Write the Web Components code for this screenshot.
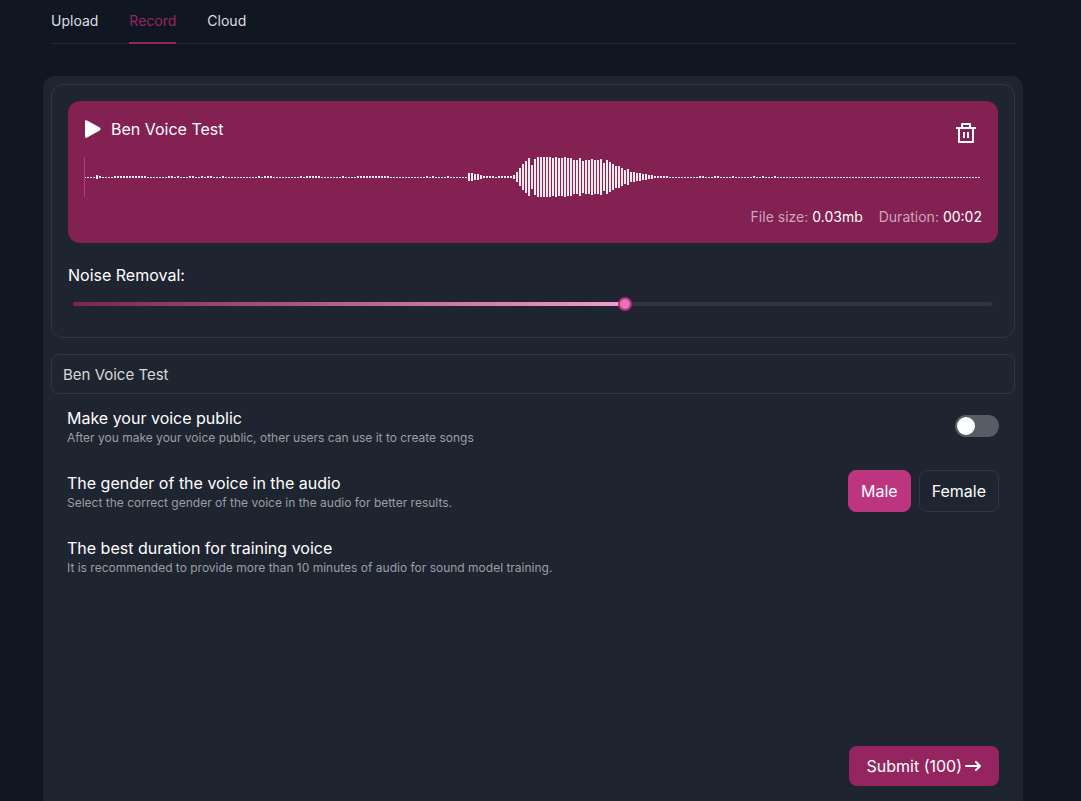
<!DOCTYPE html>
<html lang="en">
<head>
<meta charset="utf-8">
<title>Record voice</title>
<style>
  html { background: #111722; }
  body {
    margin: 0;
    min-height: 100vh;
    font: 16px/24px Inter, "Liberation Sans", sans-serif;
    color: #fff;
    --accent: #942560;
    --accent-deep: #822152;
    --accent-bright: #bd347f;
    --line: #2b3843;
    --panel: #1e2530;
    --muted: #9a9ea3;
  }
</style>
</head>
<body>
<voice-page></voice-page>

<script>
const define = (name, html, setup) => {
  const template = document.createElement('template');
  template.innerHTML = html;
  customElements.define(name, class extends HTMLElement {
    constructor() {
      super();
      this.attachShadow({ mode: 'open' }).append(template.content.cloneNode(true));
    }
    connectedCallback() {
      if (setup) setup(this, this.shadowRoot);
    }
  });
};

define('source-tabs', `
  <style>
    :host { display: block; padding: 0 8px; }
    nav { display: flex; gap: 31px; height: 43px; border-bottom: 1px solid #272b33; }
    a { box-sizing: border-box; height: 44px; padding-top: 11px; font-size: 14px; line-height: 20px; color: #dcdee0; text-decoration: none; }
    a[aria-current] { color: var(--accent); border-bottom: 2px solid var(--accent); }
  </style>
  <nav aria-label="Source">
    <a href="#upload">Upload</a>
    <a href="#record" aria-current="page">Record</a>
    <a href="#cloud">Cloud</a>
  </nav>`);

define('wave-form', `
  <style>
    :host { display: block; height: 40px; overflow: hidden; }
    svg { display: block; width: 100%; height: 40px; }
  </style>
  <svg shape-rendering="crispEdges" aria-hidden="true">
    <path class="bars" fill="#f0eaed"/>
    <rect width="1" height="40" fill="#bd347f"/>
  </svg>`, (host, root) => {
  // [first bar, last bar, height]; every other bar is silent (1px)
  const levels = new Array(299).fill(1);
  const runs = [[4,4,4],[5,5,2],[10,20,2],[28,29,2],[31,31,2],[35,36,2],[39,39,2],[41,42,2],[46,46,2],
    [58,58,2],[60,62,2],[72,72,2],[74,78,2],[86,86,2],[91,101,2],[114,114,2],[116,116,2],[121,121,2],
    [133,136,2],[138,142,2],[190,194,2],[205,206,2],[210,211,2],[216,216,2],[223,223,2],[226,226,2],[230,230,2]];
  for (const [from, to, h] of runs) levels.fill(h, from, to + 1);
  [8,8,6,6,4].forEach((h, i) => levels[128 + i] = h);
  [4,10,18,26,32,38,24,36,40,40,40,40,40,38,40,38,38,40,38,38,34,34,38,32,34,34,36,34,34,36,28,34,30,26,
   22,22,18,14,16,10,10,8,8,6,6,4,4].forEach((h, i) => levels[143 + i] = h);
  root.querySelector('.bars').setAttribute('d', levels.map((h, i) => {
    const top = h === 1 ? 20 : h === 2 ? 19 : 20 - h / 2;
    return `M${i * 3} ${top}h2v${h}h-2z`;
  }).join(''));
});

define('audio-clip', `
  <style>
    :host { display: block; padding: 16px; border-radius: 12px; background: var(--accent-deep); }
    header { display: flex; justify-content: space-between; height: 40px; }
    .title { display: flex; gap: 10px; height: 24px; }
    button { display: block; padding: 0; border: 0; background: none; color: inherit; cursor: pointer; }
    svg { display: block; }
    .remove { margin: 4px 4px 0 0; height: 24px; }
    .play { height: 24px; }
    h2 { margin: 0; font-size: 16px; line-height: 24px; font-weight: 400; }
    dl { display: flex; justify-content: flex-end; gap: 16px; margin: 10px 0 0; font-size: 14px; line-height: 20px; }
    dl div { display: flex; gap: 4px; }
    dt { color: #cda6ba; }
    dd { margin: 0; }
  </style>
  <header>
    <div class="title">
      <button class="play" aria-label="Play">
        <svg width="17" height="24" viewBox="0 0 17 24"><path fill="#fff" d="M1 4.2q0-1.3 1.3-.9.9.3 2.2 1l10.8 6q2.6 1.7 0 3.4l-10.8 6q-1.3.8-2.2 1Q1 21 1 19.8z"/></svg>
      </button>
      <h2><slot></slot></h2>
    </div>
    <button class="remove" aria-label="Delete">
      <svg width="24" height="24" viewBox="0 0 24 24"><path fill="#fff" d="M17 6h5v2h-2v13a1 1 0 0 1-1 1H5a1 1 0 0 1-1-1V8H2V6h5V3a1 1 0 0 1 1-1h8a1 1 0 0 1 1 1zm1 2H6v12h12zM9 11h2v6H9zm4 0h2v6h-2zM9 4v2h6V4z"/></svg>
    </button>
  </header>
  <wave-form></wave-form>
  <dl>
    <div><dt>File size:</dt><dd>0.03mb</dd></div>
    <div><dt>Duration:</dt><dd>00:02</dd></div>
  </dl>`);

define('noise-slider', `
  <style>
    :host { display: block; }
    label { display: block; line-height: 24px; }
    .track { display: flex; align-items: center; height: 4px; margin: 15px 5px 0; border-radius: 2px;
      background: linear-gradient(90deg, var(--accent-deep), #ec9fd2) 0 0 / 60% 100% no-repeat #2f3640; }
    input { appearance: none; flex: 1; min-width: 0; height: 14px; margin: 0 -7px; background: none; }
    input::-webkit-slider-thumb { appearance: none; box-sizing: border-box; width: 14px; height: 14px;
      border: 2px solid #b52e79; border-radius: 50%; background: #e175b7; }
  </style>
  <label for="level"><slot></slot></label>
  <div class="track"><input id="level" type="range" min="0" max="100" value="60"></div>`);

define('name-field', `
  <style>
    :host { display: block; }
    input { display: block; box-sizing: border-box; width: 100%; height: 40px; padding: 0 11px;
      border: 1px solid var(--line); border-radius: 8px; background: none; font: inherit; font-size: 15px; color: #d6d8da; outline: 0; }
  </style>
  <input type="text" aria-label="Voice name" value="Ben Voice Test">`);

define('toggle-switch', `
  <style>
    :host { display: block; }
    input { appearance: none; display: flex; box-sizing: border-box; width: 44px; height: 22px; margin: 0; padding: 2px;
      border-radius: 11px; background: #575d64; }
    input::before { content: ""; width: 18px; height: 18px; border-radius: 50%; background: #fff; }
    input:checked { justify-content: flex-end; background: var(--accent-bright); }
  </style>
  <input type="checkbox" role="switch" aria-label="Make your voice public">`);

define('gender-picker', `
  <style>
    :host { display: flex; gap: 8px; }
    button { box-sizing: border-box; height: 42px; padding: 0 12px; border: 1px solid var(--line); border-radius: 8px;
      background: none; font: inherit; color: #fff; }
    button[aria-pressed="true"] { background: var(--accent-bright); border-color: var(--accent-bright); }
  </style>
  <button aria-pressed="true">Male</button>
  <button aria-pressed="false">Female</button>`, (host, root) => {
  const buttons = [...root.querySelectorAll('button')];
  buttons.forEach(b => b.onclick = () => buttons.forEach(o => o.setAttribute('aria-pressed', o === b)));
});

define('setting-row', `
  <style>
    :host { display: flex; align-items: center; justify-content: space-between; gap: 16px; height: 42px; }
    h3, p { margin: 0; font-weight: 400; }
    h3 { font-size: 16px; line-height: 24px; }
    p { font-size: 12px; line-height: 16px; color: var(--muted); }
  </style>
  <div><h3><slot name="title"></slot></h3><p><slot name="hint"></slot></p></div>
  <slot></slot>`);

define('submit-button', `
  <style>
    :host { display: block; }
    button { display: flex; align-items: center; gap: 3px; height: 40px; padding: 0 17px; border: 0; border-radius: 8px;
      background: var(--accent); font: inherit; color: #fff; }
  </style>
  <button><slot></slot>
    <svg width="17" height="16" viewBox="0 0 17 16" fill="none" stroke="#fff" stroke-width="2" stroke-linecap="round" stroke-linejoin="round" aria-hidden="true"><path d="M1 8h14M11 4l4 4-4 4"/></svg>
  </button>`);

define('voice-page', `
  <style>
    :host { display: flex; flex-direction: column; box-sizing: border-box; min-height: 100vh; padding: 0 58px 0 43px; }
    main { flex: 1; display: flex; flex-direction: column; margin-top: 32px; padding: 8px 8px 15px;
      border-radius: 12px 12px 0 0; background: var(--panel); }
    .sample { padding: 16px 16px 31px; border: 1px solid var(--line); border-radius: 12px; }
    noise-slider { margin-top: 20px; }
    name-field { margin-top: 16px; }
    .settings { display: flex; flex-direction: column; gap: 23px; padding: 11px 16px 0; }
    footer { display: flex; justify-content: flex-end; margin-top: auto; padding-right: 16px; }
  </style>
  <source-tabs></source-tabs>
  <main>
    <section class="sample">
      <audio-clip>Ben Voice Test</audio-clip>
      <noise-slider>Noise Removal:</noise-slider>
    </section>
    <name-field></name-field>
    <section class="settings">
      <setting-row>
        <span slot="title">Make your voice public</span>
        <span slot="hint">After you make your voice public, other users can use it to create songs</span>
        <toggle-switch></toggle-switch>
      </setting-row>
      <setting-row>
        <span slot="title">The gender of the voice in the audio</span>
        <span slot="hint">Select the correct gender of the voice in the audio for better results.</span>
        <gender-picker></gender-picker>
      </setting-row>
      <setting-row>
        <span slot="title">The best duration for training voice</span>
        <span slot="hint">It is recommended to provide more than 10 minutes of audio for sound model training.</span>
      </setting-row>
    </section>
    <footer><submit-button>Submit (100)</submit-button></footer>
  </main>`);
</script>
</body>
</html>
